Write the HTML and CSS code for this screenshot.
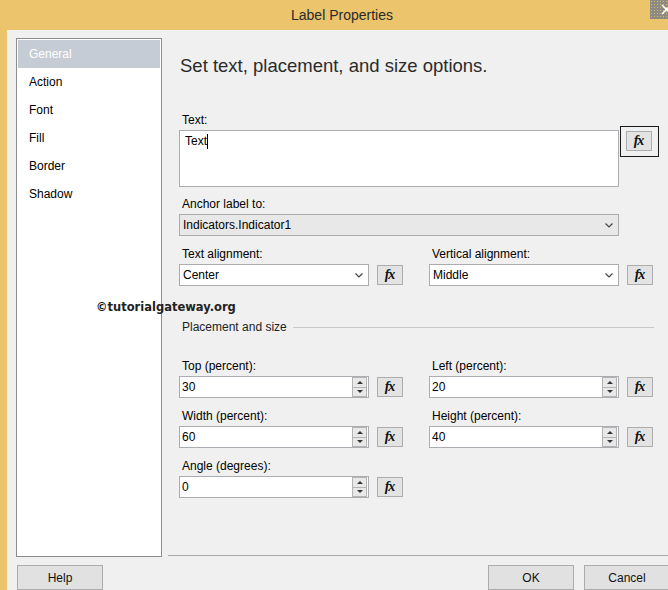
FILE: index.html
```html
<!DOCTYPE html>
<html>
<head>
<meta charset="utf-8">
<title>Label Properties</title>
<link rel="stylesheet" href="styles.css">
</head>
<body>
<div class="titlebar">
  <span class="title">Label Properties</span>
  <span class="close"><svg width="18" height="19" viewBox="0 0 18 19"><path d="M12 5 L21 14 M21 5 L12 14" stroke="#fff" stroke-width="1.6" fill="none"/></svg></span>
</div>
<div class="window">
  <div class="main">
    <ul class="nav">
      <li class="active">General</li>
      <li>Action</li>
      <li>Font</li>
      <li>Fill</li>
      <li>Border</li>
      <li>Shadow</li>
    </ul>
    <div class="content">
      <h1 class="heading">Set text, placement, and size options.</h1>

      <div class="text-block">
        <span class="lbl">Text:</span>
        <div class="text-row">
          <div class="textarea">Text<span class="caret"></span></div>
          <div class="fx-focus"><span class="fx">fx</span></div>
        </div>
      </div>

      <div class="anchor-block">
        <span class="lbl">Anchor label to:</span>
        <div class="select grey wide"><span class="v">Indicators.Indicator1</span><svg class="chev" width="8" height="5" viewBox="0 0 8 5"><polyline points="0.5,0.5 4,4 7.5,0.5" fill="none" stroke="#444" stroke-width="1.2"/></svg></div>
      </div>

      <div class="grid align-grid">
        <div class="field">
          <span class="lbl">Text alignment:</span>
          <div class="ctl">
            <div class="select"><span class="v">Center</span><svg class="chev" width="8" height="5" viewBox="0 0 8 5"><polyline points="0.5,0.5 4,4 7.5,0.5" fill="none" stroke="#444" stroke-width="1.2"/></svg></div>
            <span class="fx">fx</span>
          </div>
        </div>
        <div class="field">
          <span class="lbl">Vertical alignment:</span>
          <div class="ctl">
            <div class="select"><span class="v">Middle</span><svg class="chev" width="8" height="5" viewBox="0 0 8 5"><polyline points="0.5,0.5 4,4 7.5,0.5" fill="none" stroke="#444" stroke-width="1.2"/></svg></div>
            <span class="fx">fx</span>
          </div>
        </div>
      </div>

      <div class="group-title"><span>Placement and size</span><span class="rule"></span></div>

      <div class="grid size-grid">
        <div class="field">
          <span class="lbl">Top (percent):</span>
          <div class="ctl">
            <div class="spin-input"><span class="v">30</span><span class="spin"><span class="up"></span><span class="down"></span></span></div>
            <span class="fx">fx</span>
          </div>
        </div>
        <div class="field">
          <span class="lbl">Left (percent):</span>
          <div class="ctl">
            <div class="spin-input"><span class="v">20</span><span class="spin"><span class="up"></span><span class="down"></span></span></div>
            <span class="fx">fx</span>
          </div>
        </div>
        <div class="field">
          <span class="lbl">Width (percent):</span>
          <div class="ctl">
            <div class="spin-input"><span class="v">60</span><span class="spin"><span class="up"></span><span class="down"></span></span></div>
            <span class="fx">fx</span>
          </div>
        </div>
        <div class="field">
          <span class="lbl">Height (percent):</span>
          <div class="ctl">
            <div class="spin-input"><span class="v">40</span><span class="spin"><span class="up"></span><span class="down"></span></span></div>
            <span class="fx">fx</span>
          </div>
        </div>
        <div class="field">
          <span class="lbl">Angle (degrees):</span>
          <div class="ctl">
            <div class="spin-input"><span class="v">0</span><span class="spin"><span class="up"></span><span class="down"></span></span></div>
            <span class="fx">fx</span>
          </div>
        </div>
      </div>
    </div>
  </div>
  <div class="footer">
    <span class="btn help">Help</span>
    <span class="btn">OK</span>
    <span class="btn">Cancel</span>
  </div>
</div>
<div class="watermark">©tutorialgateway.org</div>
</body>
</html>
```
FILE: styles.css
```css
* { box-sizing: border-box; }
html, body { margin: 0; padding: 0; }
body {
  width: 668px;
  height: 590px;
  overflow: hidden;
  position: relative;
  background: #ecc46b;
  font-family: "Liberation Sans", Arial, sans-serif;
  font-size: 12px;
  color: #000;
}
.titlebar {
  height: 30px;
  display: flex;
  align-items: center;
}
.title {
  margin-left: 291px;
  font-size: 14px;
  color: #2a2a2a;
}
.close {
  margin-left: auto;
  align-self: flex-start;
  width: 18px;
  height: 19px;
  background-color: #8d8a84;
  background-image: radial-gradient(circle, #d8b862 0.8px, transparent 1px);
  background-size: 3px 3px;
  display: block;
}
.close svg { display: block; }
.window {
  margin-left: 7px;
  height: 560px;
  background: #f0f0f0;
}
.main {
  display: flex;
  height: 527px;
}
.nav {
  list-style: none;
  margin: 8px 0 0 9px;
  padding: 1px;
  width: 146px;
  height: 519px;
  background: #fff;
  border: 1px solid #8d8d8d;
  flex: none;
}
.nav li {
  height: 28px;
  line-height: 28px;
  padding-left: 11px;
}
.nav li.active {
  background: #c6ccd6;
  color: #fff;
}
.content {
  flex: 1;
  min-width: 0;
  margin-left: 6px;
  height: 526px;
  border-bottom: 1px solid #a8a8a8;
  padding: 25px 14px 0 11px;
}
.heading {
  margin: 0;
  font-size: 18.5px;
  line-height: 22px;
  font-weight: normal;
  color: #2b2b2b;
  padding-left: 1px;
}
.lbl {
  display: block;
  height: 14px;
  line-height: 14px;
  padding-left: 3px;
  margin-bottom: 3px;
  white-space: nowrap;
}
.text-block { margin-top: 36px; }
.text-row {
  display: flex;
  align-items: flex-start;
}
.textarea {
  flex: none;
  width: 440px;
  height: 57px;
  background: #fff;
  border: 1px solid #abadb3;
  padding: 3px 5px;
  line-height: 14px;
  display: flex;
  align-items: flex-start;
}
.caret {
  display: inline-block;
  width: 1px;
  height: 15px;
  background: #000;
}
.fx-focus {
  flex: none;
  margin-left: 1px;
  margin-top: -4px;
  width: 39px;
  height: 31px;
  border: 1px solid #1a1a1a;
  padding: 4px 6px 5px 5px;
}
.fx {
  flex: none;
  width: 26px;
  height: 20px;
  background: #e3e3e3;
  border: 1px solid #adadad;
  display: flex;
  align-items: center;
  justify-content: center;
  font-family: "Liberation Serif", "Times New Roman", serif;
  font-style: italic;
  font-weight: bold;
  font-size: 14px;
  letter-spacing: -1px;
  color: #111;
  padding-right: 1px;
}
.anchor-block { margin-top: 10px; }
.select {
  flex: none;
  width: 190px;
  height: 22px;
  background: #fff;
  border: 1px solid #acacac;
  display: flex;
  align-items: center;
  padding: 0 5px 0 3px;
}
.select.wide { width: 440px; }
.select.grey { background: #e8e8e8; }
.select .v { flex: 1; white-space: nowrap; }
.chev { display: block; }
.grid {
  display: grid;
  grid-template-columns: 250px 250px;
  row-gap: 11px;
}
.align-grid { margin-top: 11px; }
.ctl {
  display: flex;
  align-items: center;
  gap: 8px;
}
.group-title {
  margin-top: 34px;
  height: 14px;
  line-height: 14px;
  display: flex;
  align-items: center;
  padding-left: 3px;
  color: #222;
}
.rule {
  flex: 1;
  height: 1px;
  background: #c8c8c8;
  margin-left: 6px;
}
.size-grid { margin-top: 25px; }
.spin-input {
  flex: none;
  width: 190px;
  height: 22px;
  background: #fff;
  border: 1px solid #abadb3;
  display: flex;
  align-items: center;
  padding-left: 2px;
}
.spin-input .v { flex: 1; }
.spin {
  display: flex;
  flex-direction: column;
  width: 15px;
  height: 20px;
  margin-right: 1px;
  border: 1px solid #b4b4b4;
}
.spin span {
  flex: 1;
  background: #e8e8e8;
  display: flex;
  align-items: center;
  justify-content: center;
}
.spin .up { border-bottom: 1px solid #b4b4b4; }
.spin .up::after {
  content: "";
  border-left: 3px solid transparent;
  border-right: 3px solid transparent;
  border-bottom: 3px solid #333;
}
.spin .down::after {
  content: "";
  border-left: 3px solid transparent;
  border-right: 3px solid transparent;
  border-top: 3px solid #333;
}
.footer {
  display: flex;
  gap: 10px;
  padding: 8px 0 0 10px;
}
.btn {
  flex: none;
  width: 86px;
  height: 25px;
  background: #e1e1e1;
  border: 1px solid #acacac;
  display: flex;
  align-items: center;
  justify-content: center;
  color: #111;
}
.btn.help { margin-right: 375px; }
.watermark {
  position: absolute;
  left: 96px;
  top: 300px;
  font-family: "DejaVu Sans", Verdana, sans-serif;
  font-weight: bold;
  font-size: 11.5px;
  line-height: 14px;
  color: #222;
  white-space: nowrap;
}
```
